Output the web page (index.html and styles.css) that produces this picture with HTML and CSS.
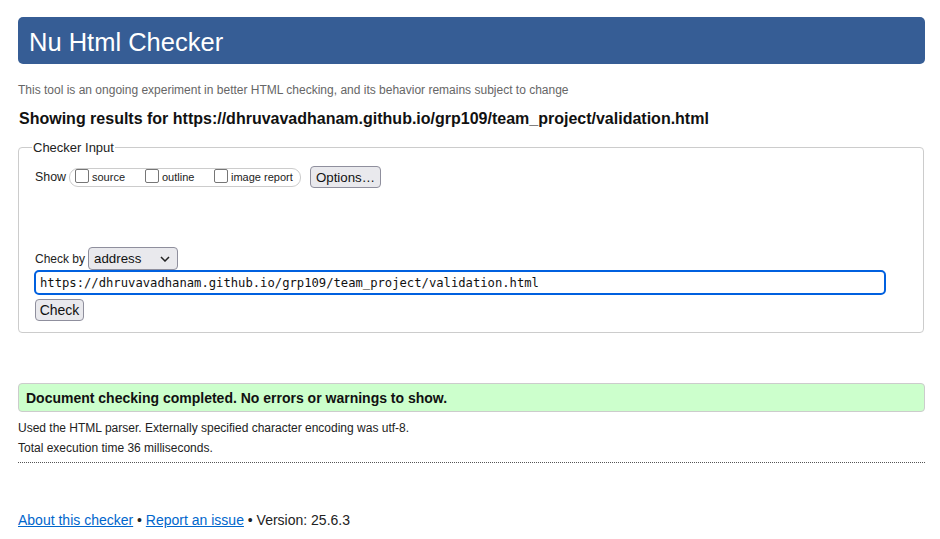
FILE: index.html
```html
<!DOCTYPE html>
<html lang="en">
<head>
<meta charset="utf-8">
<title>Nu Html Checker</title>
<link rel="stylesheet" href="styles.css">
</head>
<body>
<header class="banner"><h1 class="title">Nu Html Checker</h1></header>
<p class="notice">This tool is an ongoing experiment in better HTML checking, and its behavior remains subject to change</p>
<h2 class="results-for">Showing results for https://dhruvavadhanam.github.io/grp109/team_project/validation.html</h2>
<fieldset class="input-box">
  <legend class="legend">Checker Input</legend>
  <div class="show-row">
    <span class="lbl">Show</span>
    <span class="opts">
      <label class="opt"><span class="cb"></span>source</label>
      <label class="opt"><span class="cb"></span>outline</label>
      <label class="opt"><span class="cb"></span>image report</label>
    </span>
    <span class="btn btn-options">Options…</span>
  </div>
  <div class="checkby-row">
    <span class="lbl lbl-by">Check by</span>
    <span class="select">address
      <svg class="chev" width="10" height="6" viewBox="0 0 10 6"><path d="M1 1l4 4 4-4" fill="none" stroke="#222" stroke-width="1.5"/></svg>
    </span>
  </div>
  <div class="url">https://dhruvavadhanam.github.io/grp109/team_project/validation.html</div>
  <div class="check-row"><span class="btn btn-check">Check</span></div>
</fieldset>
<div class="success">Document checking completed. No errors or warnings to show.</div>
<p class="info">Used the HTML parser. Externally specified character encoding was utf-8.</p>
<p class="info">Total execution time 36 milliseconds.</p>
<hr class="sep">
<footer class="footer"><a href="#" class="link">About this checker</a> • <a href="#" class="link">Report an issue</a> • Version: 25.6.3</footer>
</body>
</html>
```
FILE: styles.css
```css
html, body { margin: 0; padding: 0; background: #fff; }
body {
  font-family: "Liberation Sans", Arial, sans-serif;
  color: #111;
  padding: 17px 15px 0 18px;
}
.banner {
  background: #365d95;
  border-radius: 5px;
  height: 47px;
  display: flex;
  align-items: center;
  padding-left: 11px;
}
.title {
  margin: 0;
  color: #fff;
  font-weight: normal;
  font-size: 25.5px;
  line-height: 30px;
  margin-top: 2px;
}
.notice {
  margin: 18px 0 0 0;
  color: #666;
  font-size: 12px;
  line-height: 16px;
}
.results-for {
  margin: 11px 0 0 1px;
  font-size: 16px;
  line-height: 20px;
  font-weight: bold;
  color: #111;
}
.input-box {
  margin: 11px 1px 0 0;
  border: 1px solid #ccc;
  border-radius: 4px;
  padding: 0 16px 11px 16px;
}
.legend {
  font-size: 13px;
  padding: 0 1px;
  margin-left: -3px;
  color: #222;
}
.show-row {
  display: flex;
  align-items: center;
  margin-top: 11px;
  height: 22px;
}
.lbl { color: #222; font-size: 12.4px; }
.lbl-by { font-size: 12px; }
.opts {
  display: inline-flex;
  align-items: center;
  border: 1px solid #ccc;
  border-radius: 9px;
  height: 17px;
  margin-left: 3px;
  padding: 0 5px 0 5px;
  width: 220px;
  box-sizing: content-box;
  font-size: 11px;
}
.opt {
  display: inline-flex;
  align-items: center;
  color: #222;
}
.opt:nth-child(1) { width: 70px; }
.opt:nth-child(2) { width: 69px; }
.cb {
  width: 12px;
  height: 12px;
  border: 1px solid #767676;
  border-radius: 2px;
  margin-right: 3px;
  margin-top: -3px;
  background: #fff;
}
.btn {
  display: inline-flex;
  align-items: center;
  justify-content: center;
  background: #e9e9ed;
  border: 1px solid #8f8f9d;
  border-radius: 4px;
  font-size: 13.3px;
  color: #111;
  box-sizing: border-box;
}
.btn-options {
  margin-left: 9px;
  width: 71px;
  height: 22px;
}
.checkby-row {
  display: flex;
  align-items: center;
  margin-top: 59px;
  height: 23px;
}
.select {
  display: inline-flex;
  align-items: center;
  justify-content: space-between;
  margin-left: 3px;
  width: 90px;
  height: 23px;
  box-sizing: border-box;
  background: #e9e9ed;
  border: 1px solid #8f8f9d;
  border-radius: 4px;
  padding: 0 7px 0 5px;
  font-size: 13.3px;
  color: #111;
}
.chev { margin-top: 1px; }
.url {
  margin-left: -1px;
  margin-right: 21px;
  height: 25px;
  box-sizing: border-box;
  border: 2px solid #0060df;
  border-radius: 5px;
  padding: 0 4px;
  display: flex;
  align-items: center;
  font-family: "DejaVu Sans Mono", "Liberation Mono", monospace;
  font-size: 12.2px;
  color: #111;
}
.check-row { margin-top: 4px; display: flex; }
.btn-check {
  width: 49px;
  height: 22px;
  font-size: 14px;
}
.success {
  margin-top: 50px;
  background: #ccffcc;
  border: 1px solid #ccc;
  border-radius: 4px;
  height: 29px;
  box-sizing: border-box;
  padding-left: 7px;
  display: flex;
  align-items: center;
  font-weight: bold;
  font-size: 14px;
  color: #111;
}
.info {
  margin: 0;
  font-size: 12px;
  line-height: 20px;
  color: #222;
}
.success + .info { margin-top: 6px; }
.sep {
  margin: 4px 0 0 0;
  border: 0;
  border-top: 1px dotted #555;
  height: 0;
}
.footer {
  margin-top: 48px;
  font-size: 14px;
  line-height: 18px;
  color: #222;
}
.link { color: #0066cc; text-decoration: underline; }
```
